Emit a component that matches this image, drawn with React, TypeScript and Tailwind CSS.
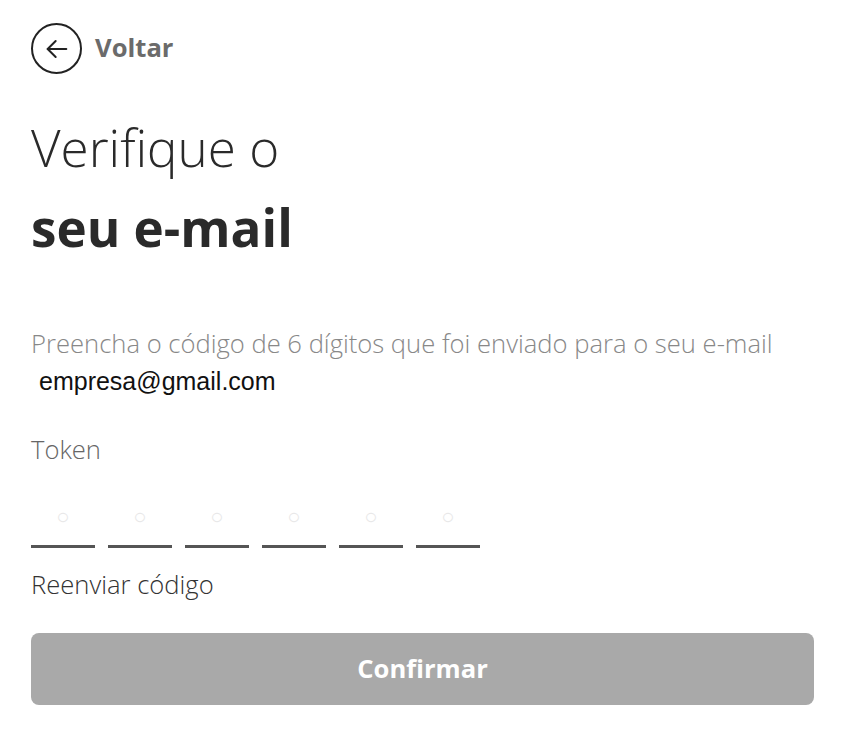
import { useState } from "react";

const OPEN_SANS = "font-['Open_Sans',sans-serif]";

export default function App() {
  const [digits, setDigits] = useState<string[]>(["", "", "", "", "", ""]);

  return (
    <div className={`min-h-screen bg-white ${OPEN_SANS}`}>
      <div className="pl-[31px] pr-[35px] pt-[23px]">
        <button type="button" className="flex items-center gap-[13px]">
          <span className="flex size-[51px] items-center justify-center rounded-full border-2 border-[#222]">
            <svg viewBox="0 0 24 24" className="size-[32px]" fill="none" stroke="#222" strokeWidth="1.5" strokeLinecap="round" strokeLinejoin="round">
              <path d="M19 12H5" />
              <path d="M11 6l-6 6 6 6" />
            </svg>
          </span>
          <span className="text-[25.6px] font-bold text-[#6b6b6b]">Voltar</span>
        </button>

        <h1 className="mt-[43px] text-[#2a2a2a]">
          <span className="block text-[51.2px] font-light leading-[60px]">Verifique o</span>
          <span className="mt-[20px] block text-[51.2px] font-bold leading-[60px]">seu e-mail</span>
        </h1>

        <p className="mt-[70px] text-[25.6px] font-light leading-[34px] text-[#888]">
          Preencha o código de 6 dígitos que foi enviado para o seu e-mail
        </p>
        <p className="mt-[5px] pl-[8px] font-['Liberation_Sans',Arial,sans-serif] text-[25px] leading-[30px] text-[#111]">
          empresa@gmail.com
        </p>

        <label className="mt-[37px] block text-[25.6px] font-light leading-[34px] text-[#666]">Token</label>

        <div className="mt-[23px] flex gap-[13px]">
          {digits.map((d, i) => (
            <input
              key={i}
              value={d}
              maxLength={1}
              placeholder="○"
              onChange={(e) => {
                const next = [...digits];
                next[i] = e.target.value;
                setDigits(next);
              }}
              className="h-[58px] w-[64px] border-b-[3px] border-[#555] bg-transparent pb-[6px] text-center text-[22px] text-[#333] outline-none placeholder:text-[#e8e8e8]"
            />
          ))}
        </div>

        <button type="button" className="mt-[20px] block text-[25.6px] font-light leading-[34px] text-[#333]">
          Reenviar código
        </button>

        <button
          type="button"
          className="mt-[31px] flex h-[72px] w-full items-center justify-center rounded-[8px] bg-[#a9a9a9] text-[25.6px] font-bold text-white"
        >
          Confirmar
        </button>
      </div>
    </div>
  );
}
